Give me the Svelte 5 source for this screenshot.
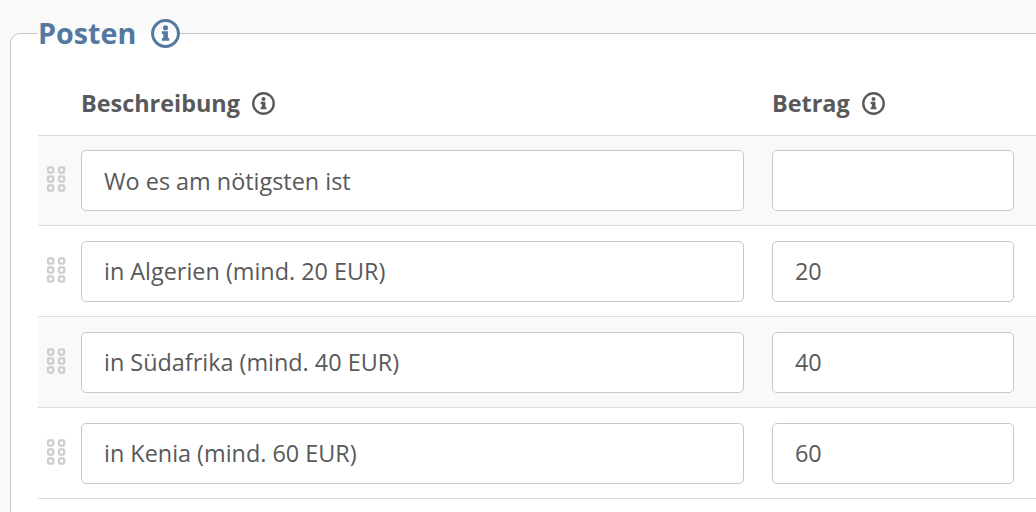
<script lang="ts">
    type Item = {
        description: string;
        amount: string;
    }

    let items: Item[] = [
        { description: 'Wo es am nötigsten ist', amount: '' },
        { description: 'in Algerien (mind. 20 EUR)', amount: '20' },
        { description: 'in Südafrika (mind. 40 EUR)', amount: '40' },
        { description: 'in Kenia (mind. 60 EUR)', amount: '60' },
    ];
</script>

{#snippet info()}
    <svg class="info" viewBox="0 0 24 24" aria-hidden="true">
        <circle cx="12" cy="12" r="10.7" fill="none" stroke="currentColor" stroke-width="2.5" />
        <circle cx="12" cy="7.2" r="2.1" fill="currentColor" />
        <path d="M9 10.2h5v5.6h1.1v2.3H9v-2.3h1.2v-3.3H9z" fill="currentColor" />
    </svg>
{/snippet}

<fieldset>
    <legend><span>Posten</span> {@render info()}</legend>
    <div class="row head">
        <span></span>
        <span class="label">Beschreibung {@render info()}</span>
        <span class="label">Betrag {@render info()}</span>
    </div>
    {#each items as item}
        <div class="row item">
            <svg class="grip" viewBox="0 0 18 26" aria-hidden="true">
                {#each [0, 9, 18] as y}
                    <rect x="1" y={y + 1.4} width="5.2" height="5.2" rx="1" />
                    <rect x="12" y={y + 1.4} width="5.2" height="5.2" rx="1" />
                {/each}
            </svg>
            <input type="text" aria-label="Beschreibung" bind:value={item.description}>
            <input type="text" aria-label="Betrag" bind:value={item.amount}>
        </div>
    {/each}
</fieldset>

<style>
    :global(body) {
        background: #f9f9f9;
        overflow: hidden;
    }
    fieldset {
        box-sizing: border-box;
        height: 512px;
        margin: 0 -20px 0 10px;
        padding: 0 0 0 27px;
        border: 1px solid #c8c8c8;
        border-bottom: 0;
        border-radius: 10px 10px 0 0;
        background: #fff;
        color: #58595a;
        font-family: "Open Sans", sans-serif;
        font-size: 23.4px;
    }
    legend {
        display: flex;
        align-items: center;
        gap: 15px;
        box-sizing: border-box;
        height: 67px;
        padding: 0 0 1px;
        color: #54789f;
        font-size: 28.7px;
        font-weight: 700;
    }
    legend span {
        padding-bottom: 2px;
    }
    legend .info {
        width: 29px;
        height: 29px;
    }
    .row {
        display: grid;
        grid-template-columns: 15px 663px 242px;
        column-gap: 28px;
        box-sizing: border-box;
        height: 91px;
        border-bottom: 1px solid #dcdcdc;
    }
    .head {
        height: 69px;
        align-items: center;
    }
    .label {
        display: flex;
        align-items: center;
        gap: 12px;
        padding-top: 4px;
        font-size: 23.4px;
        font-weight: 700;
    }
    .label .info {
        width: 23px;
        height: 23px;
    }
    .info {
        flex: none;
        overflow: visible;
    }
    .item {
        align-items: start;
        padding-top: 15px;
    }
    .item:nth-of-type(2) {
        height: 90px;
        padding-top: 14px;
    }
    .item:nth-of-type(even) {
        background: #f9f9f9;
    }
    .grip {
        width: 18px;
        height: 26px;
        margin: 16px 0 0 9px;
        overflow: visible;
        fill: none;
        stroke: #cdcdcd;
        stroke-width: 2.2;
    }
    input {
        box-sizing: border-box;
        width: 100%;
        height: 61px;
        margin: 0;
        padding: 0 22px 1px;
        border: 1px solid #c8c8c8;
        border-radius: 5px;
        background: #fff;
        color: #58595a;
        font: inherit;
        outline: none;
    }
    .item:nth-of-type(2) input {
        padding: 1px 22px 0;
    }
</style>
